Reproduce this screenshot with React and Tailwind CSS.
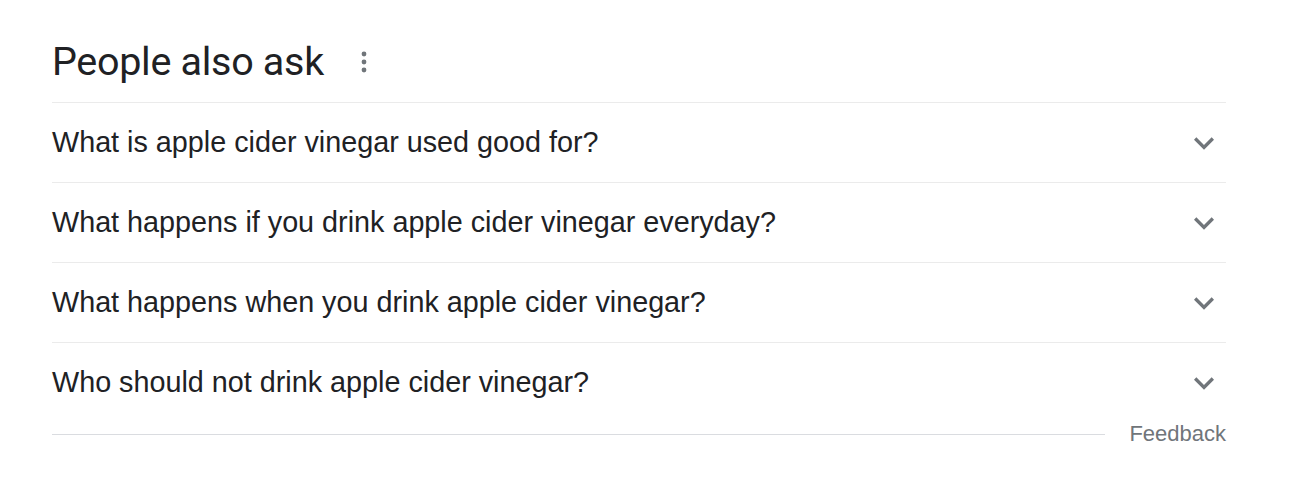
import React from "react";

const questions = [
	"What is apple cider vinegar used good for?",
	"What happens if you drink apple cider vinegar everyday?",
	"What happens when you drink apple cider vinegar?",
	"Who should not drink apple cider vinegar?",
];

function Chevron() {
	return (
		<svg width="40" height="40" viewBox="0 0 24 24" className="text-[#70757a]">
			<path
				d="M16.59 8.59 12 13.17 7.41 8.59 6 10l6 6 6-6z"
				fill="currentColor"
			/>
		</svg>
	);
}

function Dots() {
	return (
		<svg width="6" height="22" viewBox="0 0 6 22" className="text-[#70757a]">
			<circle cx="3" cy="3" r="2.4" fill="currentColor" />
			<circle cx="3" cy="11" r="2.4" fill="currentColor" />
			<circle cx="3" cy="19" r="2.4" fill="currentColor" />
		</svg>
	);
}

export default function App() {
	return (
		<div className="w-[1290px] h-[480px] bg-white font-['Liberation_Sans',Arial,sans-serif]">
			<div className="ml-[52px] w-[1174px] pt-[36px]">
				{/* Header */}
				<div className="flex items-center h-[67px] border-b border-[#ebebeb]">
					<h2 className="text-[39.5px] leading-[52px] text-[#202124] font-['Roboto',sans-serif] tracking-[-0.3px] -mt-[14px]">
						People also ask
					</h2>
					<div className="ml-[37px] -mt-[14px] flex items-center">
						<Dots />
					</div>
				</div>

				{/* Questions */}
				{questions.map((q, i) => (
					<div
						key={i}
						className={
							"flex items-center justify-between h-[80px] " +
							(i < questions.length - 1 ? "border-b border-[#ebebeb]" : "")
						}
					>
						<span className="text-[28.75px] text-[#202124]">{q}</span>
						<div className="mr-[2px] flex items-center">
							<Chevron />
						</div>
					</div>
				))}

				{/* Footer */}
				<div className="flex items-center -mt-[2px]">
					<div className="flex-1 border-t border-[#dadce0]" />
					<span className="ml-[24px] text-[22px] leading-[26px] text-[#70757a]">Feedback</span>
				</div>
			</div>
		</div>
	);
}
